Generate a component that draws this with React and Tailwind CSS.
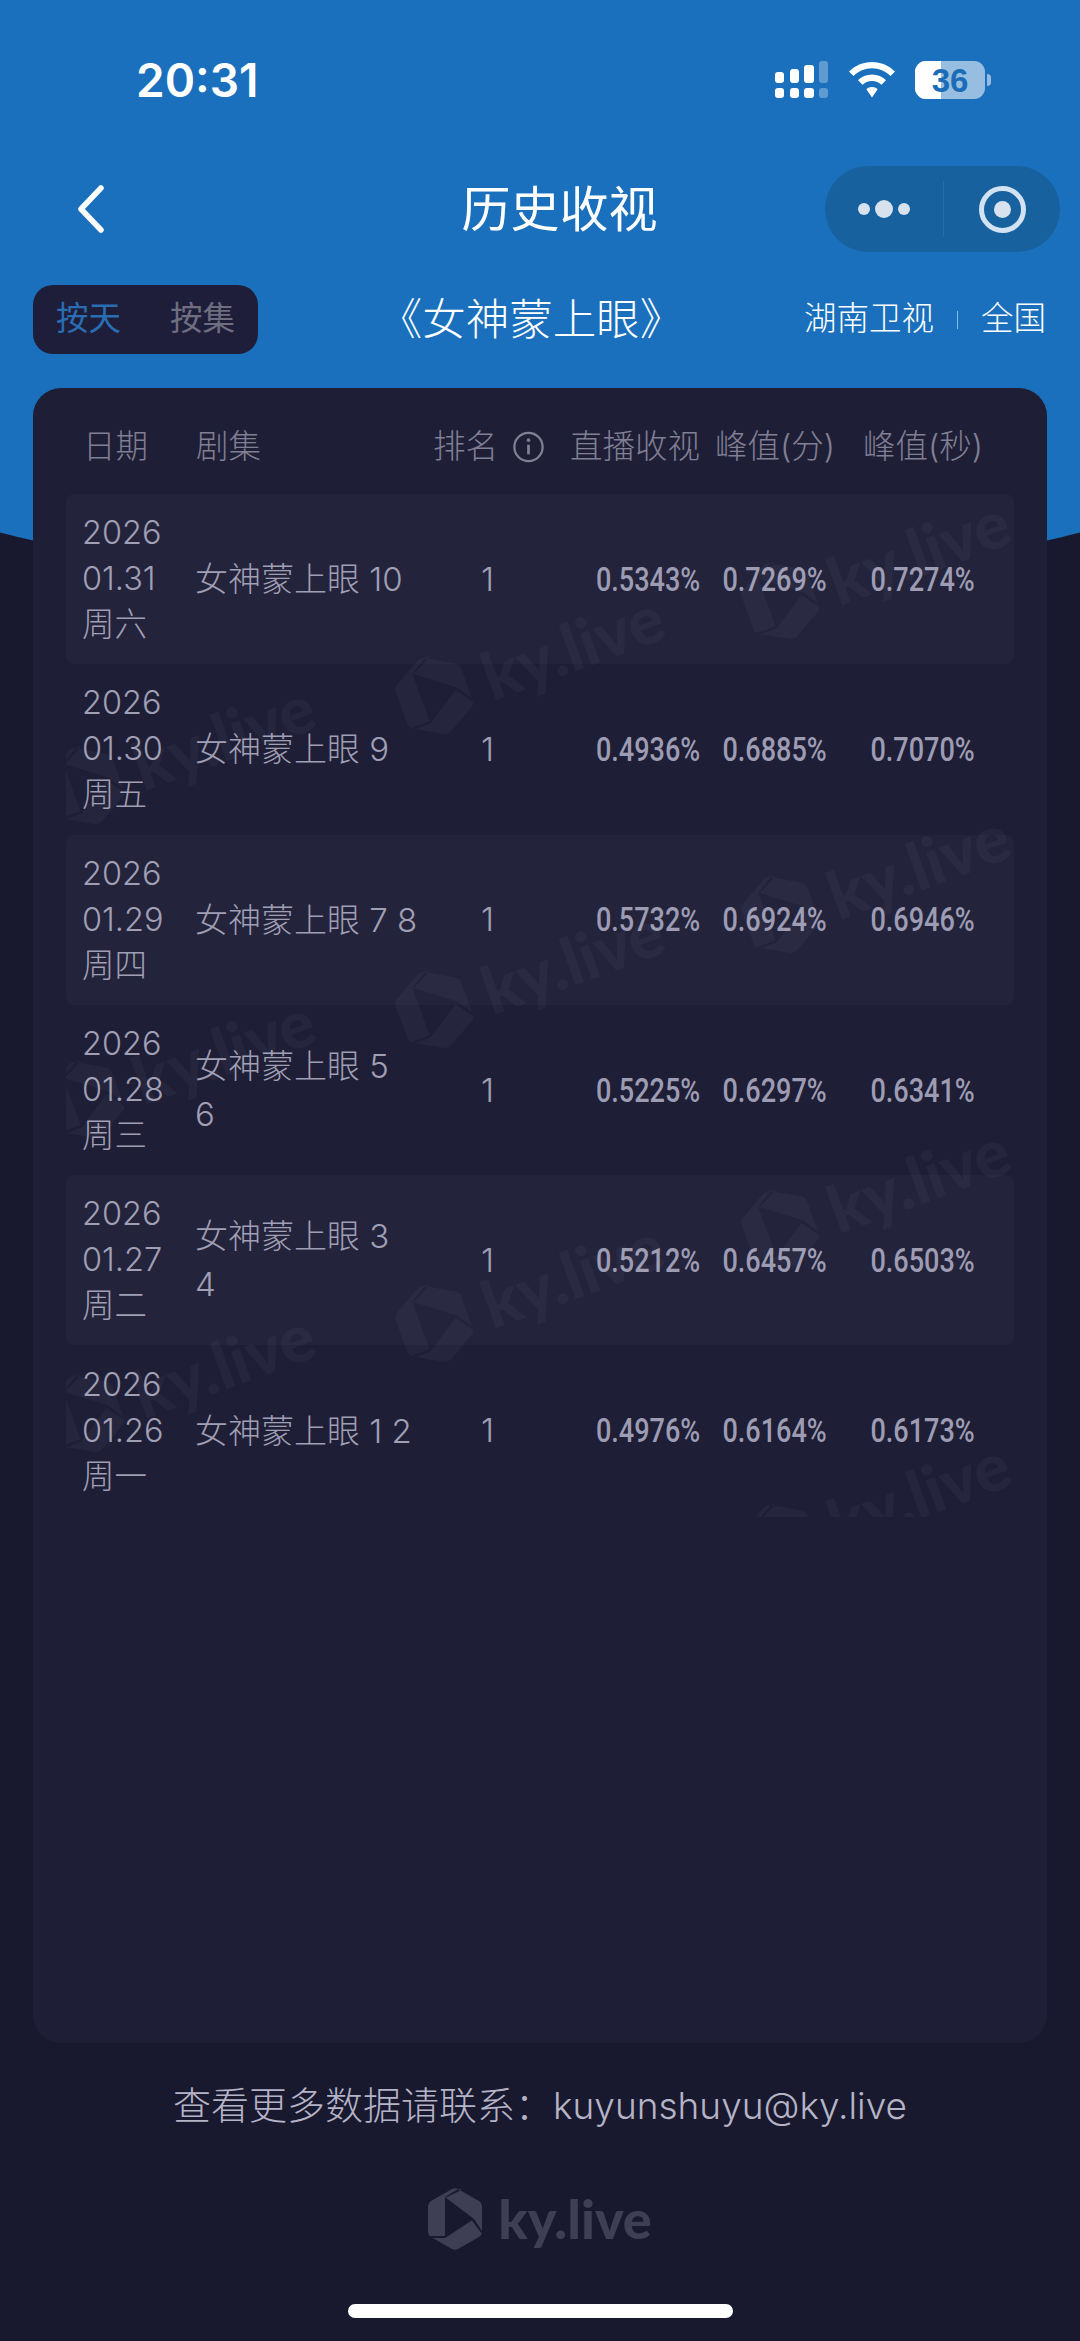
const CJK = "font-['Inter','Noto_Sans_CJK_SC',sans-serif]";

const rows = [
  { y: '2026', d: '01.31', w: '周六', ep: ['女神蒙上眼 10'], a: '0.5343%', b: '0.7269%', c: '0.7274%' },
  { y: '2026', d: '01.30', w: '周五', ep: ['女神蒙上眼 9'], a: '0.4936%', b: '0.6885%', c: '0.7070%' },
  { y: '2026', d: '01.29', w: '周四', ep: ['女神蒙上眼 7 8'], a: '0.5732%', b: '0.6924%', c: '0.6946%' },
  { y: '2026', d: '01.28', w: '周三', ep: ['女神蒙上眼 5', '6'], a: '0.5225%', b: '0.6297%', c: '0.6341%' },
  { y: '2026', d: '01.27', w: '周二', ep: ['女神蒙上眼 3', '4'], a: '0.5212%', b: '0.6457%', c: '0.6503%' },
  { y: '2026', d: '01.26', w: '周一', ep: ['女神蒙上眼 1 2'], a: '0.4976%', b: '0.6164%', c: '0.6173%' },
];

const marks = [
  [547, 655], [547, 969], [547, 1283],
  [893, 560], [893, 874], [893, 1188], [893, 1502],
  [198, 745], [198, 1059], [198, 1373],
];

function Logo({ className }) {
  return (
    <svg viewBox="0 0 54 62" className={className}>
      <path
        fill="currentColor"
        fillRule="evenodd"
        d="M24 1 Q27 -0.5 30 1 L51 13 Q54 15 54 18 L54 44 Q54 47 51 49 L30 61 Q27 62.5 24 61 L3 49 Q0 47 0 44 L0 18 Q0 15 3 13 Z M17 9 L17 50 L46 31 Z M31 0.5 L33.5 2 L19 9 L17 9 Z M46 31 L54 43 L54 46 L44 32.5 Z M17 50 L4 50 L2.5 48 L17 48 Z"
      />
    </svg>
  );
}

function Watermark({ x, y }) {
  return (
    <div
      className="absolute flex items-center gap-[18px] w-[310px] h-[90px] -rotate-[20deg] text-[#ffffff09]"
      style={{ left: x - 155 - 66, top: y - 45 - 494 }}
    >
      <Logo className="w-[70px] h-[84px] shrink-0" />
      <span className="font-['Lato',sans-serif] font-black text-[66px] leading-none">ky.live</span>
    </div>
  );
}

function Num({ children, origin }) {
  return (
    <span className={`inline-block scale-x-[0.82] font-['Roboto',sans-serif] font-medium text-[33px] text-[#9d9cb3] ${origin}`}>
      {children}
    </span>
  );
}

export default function App() {
  return (
    <div className={`relative w-[1080px] h-[2341px] overflow-hidden bg-[#18182e] ${CJK}`}>
      <div className="absolute top-0 left-[-400px] w-[1880px] h-[593px] bg-[#1a70bd] [border-radius:0_0_940px_940px/0_0_333px_333px]" />
      <div className="relative flex flex-col h-full">
        {/* status bar */}
        <div className="flex items-center h-[166px] pb-[6px] pl-[136px]">
          <span className="font-['Inter',sans-serif] font-semibold text-[46px] leading-none text-white w-[639px]">20:31</span>
          <svg viewBox="0 0 54 38" className="w-[54px] h-[38px]">
            <g fill="#fff">
              <rect x="0" y="11" width="9" height="11" rx="3" />
              <rect x="15" y="8" width="9" height="14" rx="3" />
              <rect x="29" y="4" width="10" height="18" rx="3" />
              <rect x="0" y="27" width="9" height="10" rx="3" />
              <rect x="15" y="27" width="9" height="10" rx="3" />
              <rect x="29" y="27" width="10" height="10" rx="3" />
            </g>
            <g fill="#fff" opacity="0.3">
              <rect x="44" y="0" width="9" height="22" rx="3" />
              <rect x="44" y="27" width="9" height="10" rx="3" />
            </g>
          </svg>
          <svg viewBox="0 0 48 36" className="ml-[19px] w-[48px] h-[36px]">
            <path fill="#fff" d="M24 0 C33 0 41 3.6 47 9.5 L42.5 14 C37.6 9.2 31 6.3 24 6.3 C17 6.3 10.4 9.2 5.5 14 L1 9.5 C7 3.6 15 0 24 0 Z" />
            <path fill="#fff" d="M24 12.5 C29.5 12.5 34.4 14.7 38 18.3 L33.5 22.8 C31 20.4 27.7 18.9 24 18.9 C20.3 18.9 17 20.4 14.5 22.8 L10 18.3 C13.6 14.7 18.5 12.5 24 12.5 Z" />
            <path fill="#fff" d="M24 25 C26.2 25 28.1 25.8 29.6 27.2 L24 35.5 L18.4 27.2 C19.9 25.8 21.8 25 24 25 Z" />
          </svg>
          <div className="relative ml-[19px] w-[70px] h-[38px] rounded-[11px] overflow-hidden bg-[#ffffff8c] flex items-center justify-center">
            <div className="absolute left-0 top-0 bottom-0 w-[26px] bg-white" />
            <span className="relative font-['Liberation_Sans',sans-serif] font-bold text-[33px] leading-none text-[#1a6cb6]">36</span>
          </div>
          <div className="ml-[2px] w-[4px] h-[12px] rounded-r-[4px] bg-[#ffffff8c]" />
        </div>

        {/* nav */}
        <div className="flex items-center h-[86px]">
          <div className="w-[294px] pl-[76px]">
            <svg viewBox="0 0 30 48" className="w-[30px] h-[48px]" fill="none" stroke="#fff" strokeWidth="5.5" strokeLinecap="round" strokeLinejoin="round">
              <path d="M25 3 L5 24 L25 45" />
            </svg>
          </div>
          <div className="flex-1 text-center text-[49px] leading-none text-white">历史收视</div>
          <div className="mr-[20px] w-[235px] h-[86px] rounded-[43px] bg-[#17619f] flex items-center">
            <div className="w-[118px] flex items-center justify-center gap-[5px]">
              <span className="w-[12px] h-[12px] rounded-full bg-[#d7e2ee]" />
              <span className="w-[18px] h-[18px] rounded-full bg-[#d7e2ee]" />
              <span className="w-[12px] h-[12px] rounded-full bg-[#d7e2ee]" />
            </div>
            <div className="w-px h-[56px] bg-[#ffffff14]" />
            <div className="flex-1 flex items-center justify-center">
              <div className="w-[47px] h-[47px] rounded-full border-[5px] border-[#d2e2f2] flex items-center justify-center">
                <span className="w-[17px] h-[17px] rounded-full bg-[#d7e2ee]" />
              </div>
            </div>
          </div>
        </div>

        {/* toolbar */}
        <div className="flex items-center h-[69px] mt-[33px] px-[33px]">
          <div className="w-[225px] h-[69px] rounded-[20px] bg-[#1e1e3a] flex items-center pl-[23px] gap-[49px] text-[32.5px] leading-none">
            <span className="text-[#2a6db3]">按天</span>
            <span className="text-[#6f6e80]">按集</span>
          </div>
          <div className="flex-1 text-center text-[43.5px] leading-none font-light text-white whitespace-nowrap">《女神蒙上眼》</div>
          <div className="flex items-center mr-[1px] text-[32.5px] leading-none font-light text-white">
            <span>湖南卫视</span>
            <span className="mx-[23px] w-px h-[18px] bg-[#ffffff80]" />
            <span>全国</span>
          </div>
        </div>

        {/* card */}
        <div className="mt-[34px] mx-[33px] h-[1655px] rounded-[28px] bg-[#1e1e36] px-[33px]">
          <div className="grid grid-cols-[113px_237px_111px_156px_150px_146px] h-[106px] pt-[12px] pl-[17px] items-center text-[32.5px] leading-none font-light text-[#807f93] whitespace-nowrap">
            <span>日期</span>
            <span>剧集</span>
            <span className="flex items-center">
              排名
              <svg viewBox="0 0 34 34" className="ml-[15px] w-[36px] h-[36px]" fill="none" stroke="#807f93" strokeWidth="2.5">
                <circle cx="17" cy="17" r="15.5" />
                <path d="M17 14.5 V25" strokeWidth="3" />
                <circle cx="17" cy="9.5" r="2" fill="#807f93" stroke="none" />
              </svg>
            </span>
            <span className="text-right">直播收视</span>
            <span className="text-center">峰值(分)</span>
            <span className="text-center">峰值(秒)</span>
          </div>
          <div className="relative h-[1023px] overflow-hidden">
            {rows.map((r, i) => (
              <div
                key={r.d}
                className={`grid grid-cols-[113px_237px_111px_156px_150px_146px] h-[170.3px] pl-[17px] items-center rounded-[8px] text-[33px] font-light text-[#a09fb4] ${i % 2 === 0 ? 'bg-[#23233c]' : ''}`}
              >
                <div className="leading-[46px] whitespace-nowrap -ml-[1px] text-[32.5px]">
                  <div>{r.y}</div>
                  <div>{r.d}</div>
                  <div>{r.w}</div>
                </div>
                <div className="leading-[48px] whitespace-nowrap -ml-[1px]">
                  {r.ep.map((t) => (
                    <div key={t}>{t}</div>
                  ))}
                </div>
                <div className="pl-[48px] leading-none">1</div>
                <div className="text-right leading-none"><Num origin="origin-right">{r.a}</Num></div>
                <div className="text-center leading-none"><Num origin="origin-center">{r.b}</Num></div>
                <div className="text-center leading-none"><Num origin="origin-center">{r.c}</Num></div>
              </div>
            ))}
            {marks.map(([x, y]) => (
              <Watermark key={`${x}-${y}`} x={x} y={y} />
            ))}
          </div>
        </div>

        {/* footer */}
        <div className="mt-[40px] text-center text-[38px] leading-[44px] font-light text-[#b5b3c6] whitespace-nowrap">
          查看更多数据请联系：<span className="text-[37px]">kuyunshuyu@ky.live</span>
        </div>
        <div className="mt-[60px] flex items-center justify-center gap-[16px] text-[#3e3e55]">
          <Logo className="w-[54px] h-[62px]" />
          <span className="font-['Lato',sans-serif] font-black text-[54px] leading-none">ky.live</span>
        </div>
        <div className="mt-[54px] mx-auto w-[385px] h-[14px] rounded-full bg-white" />
      </div>
    </div>
  );
}
